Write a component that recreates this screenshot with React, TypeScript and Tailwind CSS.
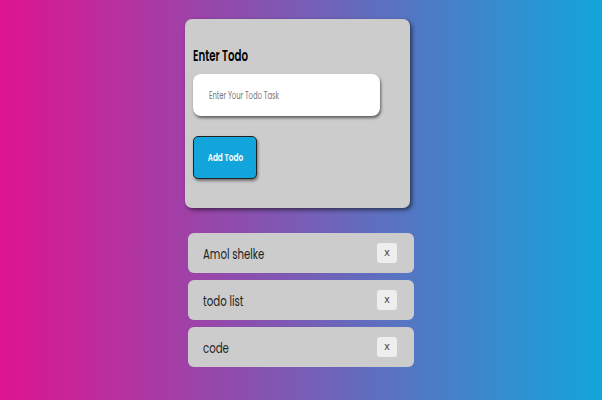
import React from "react";

const todos = ["Amol shelke", "todo list", "code"];

export default function App() {
  return (
    <div
      className="w-[602px] h-[400px] overflow-hidden bg-linear-to-r/srgb from-[#df1490] to-[#12a5db] pt-[19px] pl-[185px]"
      style={{ fontFamily: "Poppins, Inter, 'Noto Sans', sans-serif" }}
    >
      <div className="w-[225px] h-[189px] bg-[#cccccc] rounded-[7px] shadow-[2px_2px_4px_rgba(0,0,0,0.55)] pt-[26px] px-[8px]">
        <h2 className="text-[15.5px] leading-[22px] font-semibold text-black origin-left scale-x-[0.66] whitespace-nowrap">Enter Todo</h2>
        <div className="mt-[7px] w-[187px] h-[42px] bg-white rounded-[8px] shadow-[1px_2px_3px_rgba(0,0,0,0.55)] flex items-center pl-[16px]">
          <span className="text-[10px] text-[#777] origin-left scale-x-[0.68] whitespace-nowrap">Enter Your Todo Task</span>
        </div>
        <button className="mt-[20px] w-[64px] h-[43px] bg-[#12a5db] border border-[#222] rounded-[5px] shadow-[1px_2px_3px_rgba(0,0,0,0.45)] flex items-center justify-center">
          <span className="text-[10.5px] font-semibold text-white scale-x-[0.7] whitespace-nowrap">Add Todo</span>
        </button>
      </div>
      <div className="mt-[25px] ml-[3px] w-[226px] flex flex-col gap-[7px]">
        {todos.map((t) => (
          <div key={t} className="h-[40px] bg-[#cccccc] rounded-[6px] flex items-center justify-between pl-[15px] pr-[17px]">
            <span className="text-[15px] leading-[22px] pt-[2px] text-[#222] origin-left scale-x-[0.68] whitespace-nowrap">{t}</span>
            <span
              className="w-[20px] h-[20px] bg-[#eeeeee] rounded-[3px] flex items-center justify-center text-[10px] text-[#333]"
              style={{ fontFamily: "'Liberation Mono', monospace" }}
            >
              x
            </span>
          </div>
        ))}
      </div>
    </div>
  );
}
